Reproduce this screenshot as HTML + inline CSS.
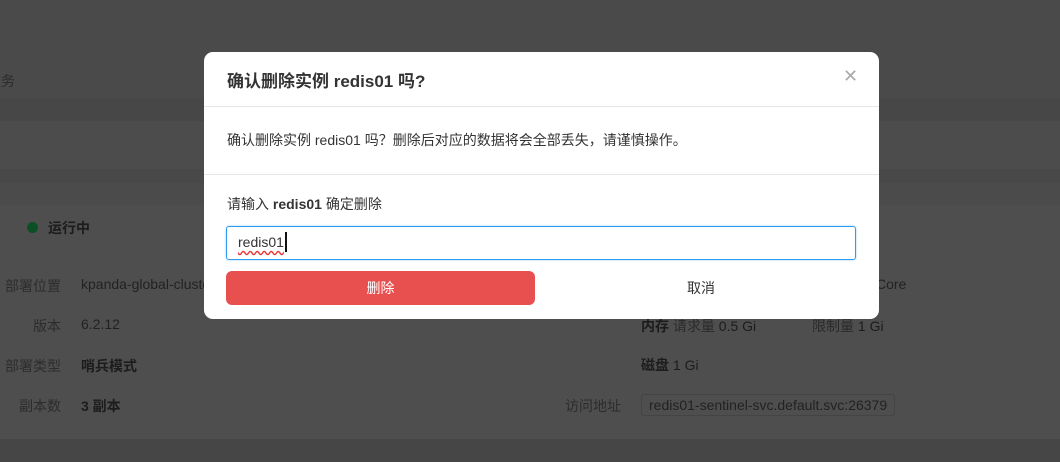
<!DOCTYPE html>
<html><head><meta charset="utf-8"><style>
*{margin:0;padding:0;box-sizing:border-box}
body{width:1060px;height:462px;overflow:hidden;background:#4b4b4b;font-family:"Liberation Sans","Noto Sans CJK SC",sans-serif;position:relative;color:#222}
.b{position:absolute;left:0;width:1060px}
.t{position:absolute;font-size:14px;white-space:nowrap}
.g{color:#2c2c2c}
.l{color:#333}
.modal{position:absolute;left:204px;top:52px;width:675px;height:267px;background:#fff;border-radius:9px}
</style></head><body>
<div class="b" style="top:0;height:99px;background:#4a4a4a"></div>
<div class="b" style="top:99px;height:22px;background:#474747"></div>
<div class="b" style="top:121px;height:48px;background:#4c4c4c"></div>
<div class="b" style="top:169px;height:14px;background:#484848"></div>
<div class="b" style="top:183px;height:22px;background:#4b4b4b"></div>
<div class="b" style="top:205px;height:234px;background:#4e4e4e"></div>
<div class="b" style="top:439px;height:23px;background:#464646"></div>
<div class="t g" style="left:-13px;top:71px">服务</div>
<div style="position:absolute;left:27px;top:222px;width:11px;height:11px;border-radius:50%;background:#0b4f25"></div>
<div class="t" style="left:48px;top:218px;font-weight:bold;color:#1c1c1c">运行中</div>
<div class="t g" style="left:5px;top:276px">部署位置</div>
<div class="t l" style="left:81px;top:276px;color:#222">kpanda-global-cluster</div>
<div class="t g" style="left:33px;top:316px">版本</div>
<div class="t" style="left:81px;top:316px;color:#222">6.2.12</div>
<div class="t g" style="left:5px;top:356px">部署类型</div>
<div class="t" style="left:81px;top:356px;font-weight:bold;color:#1c1c1c">哨兵模式</div>
<div class="t g" style="left:19px;top:396px">副本数</div>
<div class="t" style="left:81px;top:396px;font-weight:bold;color:#1c1c1c">3 副本</div>
<div class="t" style="left:876px;top:276px;color:#222">Core</div>
<div class="t" style="left:641px;top:316px;color:#1c1c1c"><b>内存</b> <span style="color:#2a2a2a">请求量</span> 0.5 Gi</div>
<div class="t" style="left:812px;top:316px;color:#1c1c1c"><span style="color:#2a2a2a">限制量</span> 1 Gi</div>
<div class="t" style="left:641px;top:355px;color:#1c1c1c"><b>磁盘</b> 1 Gi</div>
<div class="t g" style="left:565px;top:396px">访问地址</div>
<div class="t" style="left:641px;top:394px;height:22px;padding:2px 7px;border:1px solid #444;border-radius:3px;color:#222">redis01-sentinel-svc.default.svc:26379</div>

<div class="modal">
<div class="t" style="left:23px;top:15px;font-size:17px;font-weight:bold;color:#333">确认删除实例 redis01 吗?</div>
<div class="t" style="left:639px;top:14px;font-size:18px;color:#aaa">✕</div>
<div style="position:absolute;left:0;top:54px;width:675px;height:1px;background:#e6e7eb"></div>
<div class="t" style="left:23px;top:78px;color:#333">确认删除实例 redis01 吗？删除后对应的数据将会全部丢失，请谨慎操作。</div>
<div style="position:absolute;left:0;top:122px;width:675px;height:1px;background:#e6e7eb"></div>
<div class="t" style="left:23px;top:142px;color:#333">请输入 <b>redis01</b> 确定删除</div>
<div style="position:absolute;left:22px;top:174px;width:630px;height:34px;border:1px solid #2f9bf0;border-radius:3px;box-shadow:0 0 2px #9cd0f8"></div>
<div class="t" style="left:34px;top:182px;color:#333;text-decoration:underline wavy #e33;text-underline-offset:3px">redis01</div>
<div style="position:absolute;left:81px;top:180px;width:2px;height:20px;background:#111"></div>
<div style="position:absolute;left:22px;top:219px;width:309px;height:34px;background:#e85050;border-radius:6px;color:#fff;font-size:14px;text-align:center;line-height:34px">删除</div>
<div class="t" style="left:483px;top:226px;color:#333">取消</div>
</div>
</body></html>
